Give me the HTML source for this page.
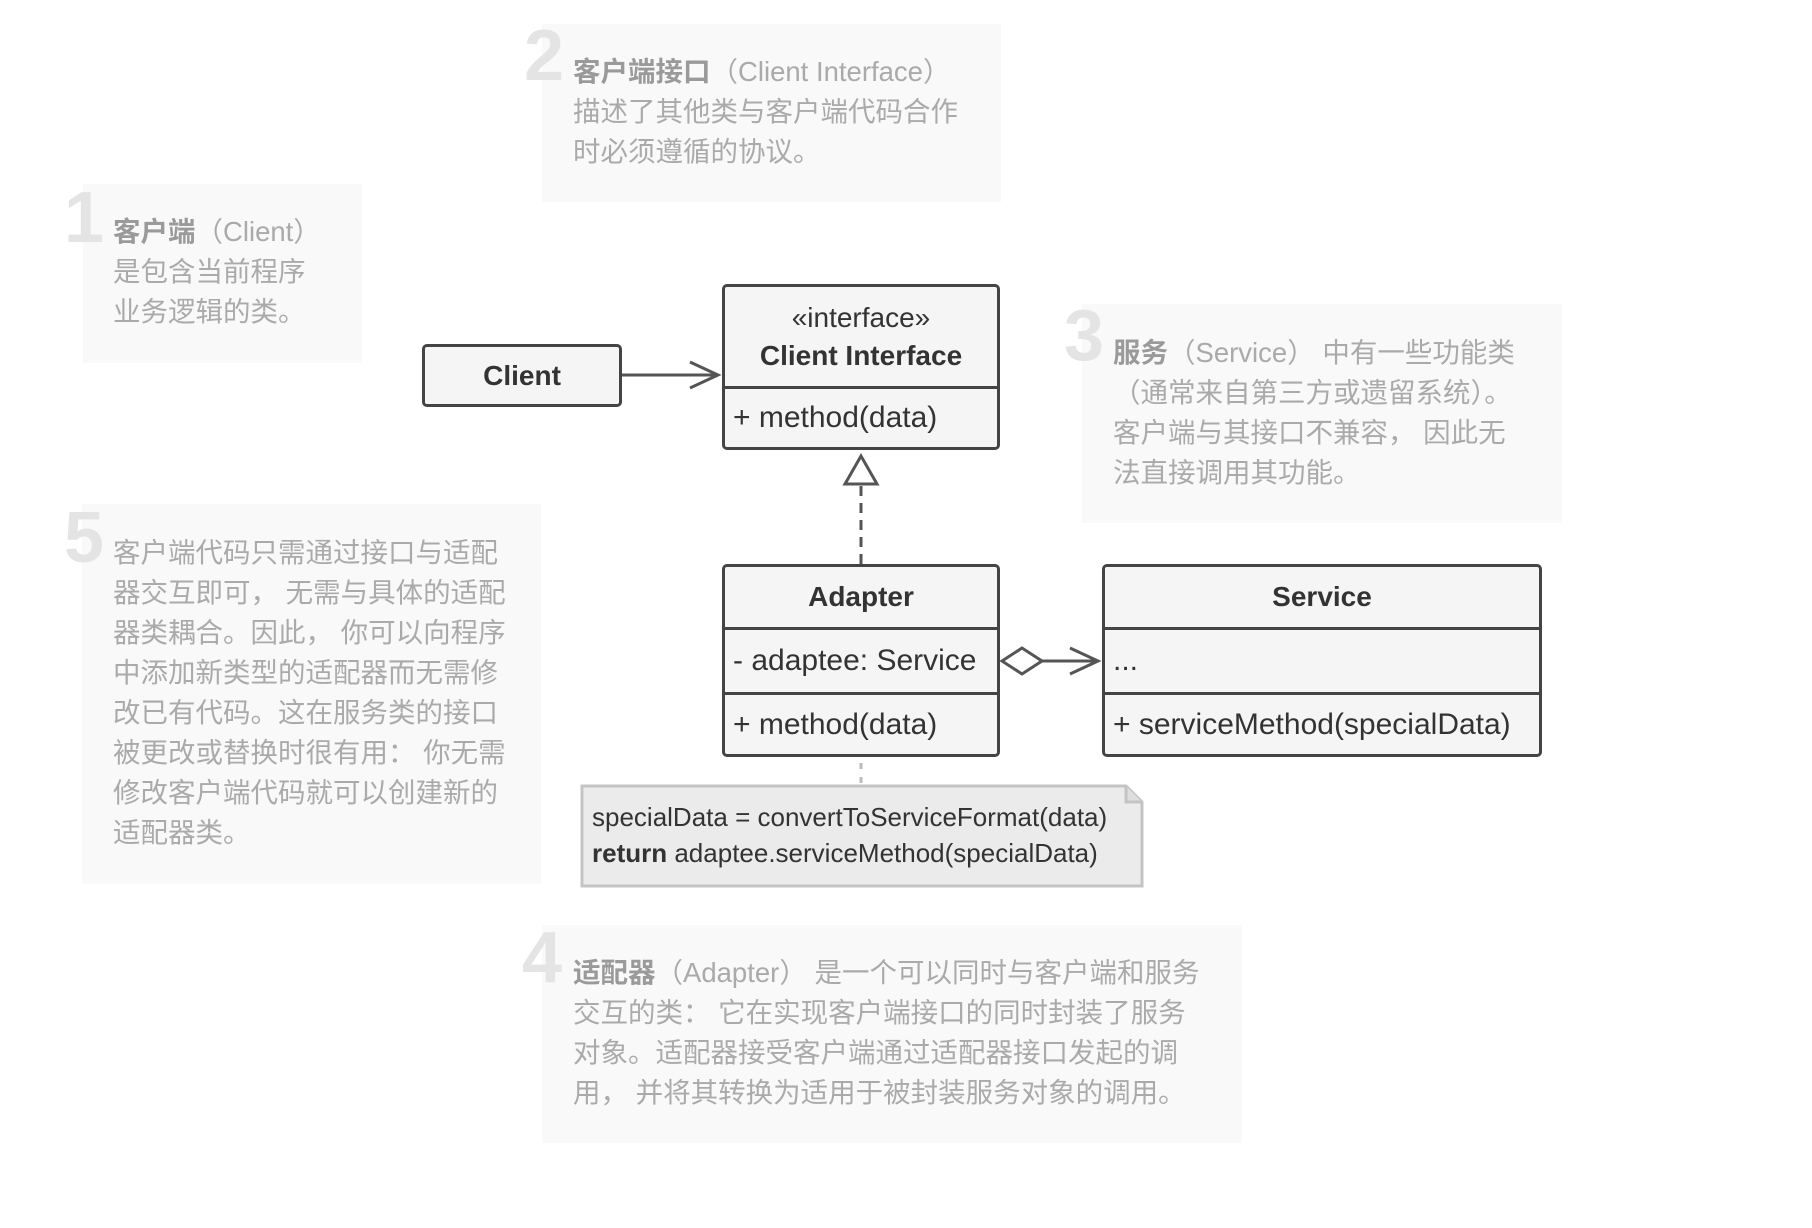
<!DOCTYPE html>
<html><head><meta charset="utf-8"><style>
*{margin:0;padding:0;box-sizing:border-box}
body{width:1812px;height:1228px;background:#fff;position:relative;overflow:hidden;font-family:"Liberation Sans","Noto Sans CJK SC",sans-serif}
.tb{position:absolute;background:#f9f9f9}
.num{position:absolute;font:bold 72px "Liberation Sans",sans-serif;color:#e4e4e4;line-height:1}
.tx{position:absolute;font-size:27.5px;line-height:40px;color:#aaa;font-family:"Liberation Sans","Noto Sans CJK SC",sans-serif;white-space:nowrap}
.tx b{color:#9a9a9a}
.box{position:absolute;border:3px solid #444;border-radius:5px;background:#f5f5f5;color:#333}
.row{position:absolute;left:0;right:0;display:flex;align-items:center;font-size:30px;padding-left:8px;white-space:nowrap}
.hd{justify-content:center;font-weight:bold;font-size:28px;padding-left:0}
.sep{position:absolute;left:0;right:0;height:3px;background:#444}
</style></head><body>

<div class="tb" style="left:83px;top:184px;width:279px;height:179px"></div>
<div class="tb" style="left:542px;top:24px;width:459px;height:178px"></div>
<div class="tb" style="left:1082px;top:304px;width:480px;height:219px"></div>
<div class="tb" style="left:82px;top:504px;width:459px;height:380px"></div>
<div class="tb" style="left:542px;top:925px;width:700px;height:218px"></div>

<div class="num" style="left:64px;top:182px">1</div>
<div class="num" style="left:524px;top:20px">2</div>
<div class="num" style="left:1064px;top:300px">3</div>
<div class="num" style="left:64px;top:502px">5</div>
<div class="num" style="left:522px;top:922px">4</div>

<div class="tx" style="left:113px;top:212px"><b>客户端</b>（Client）<br>是包含当前程序<br>业务逻辑的类。</div>
<div class="tx" style="left:573px;top:52px"><b>客户端接口</b>（Client Interface）<br>描述了其他类与客户端代码合作<br>时必须遵循的协议。</div>
<div class="tx" style="left:1113px;top:333px"><b>服务</b>（Service） 中有一些功能类<br>（通常来自第三方或遗留系统）。<br>客户端与其接口不兼容， 因此无<br>法直接调用其功能。</div>
<div class="tx" style="left:113px;top:533px">客户端代码只需通过接口与适配<br>器交互即可， 无需与具体的适配<br>器类耦合。因此， 你可以向程序<br>中添加新类型的适配器而无需修<br>改已有代码。这在服务类的接口<br>被更改或替换时很有用： 你无需<br>修改客户端代码就可以创建新的<br>适配器类。</div>
<div class="tx" style="left:573px;top:953px"><b>适配器</b>（Adapter） 是一个可以同时与客户端和服务<br>交互的类： 它在实现客户端接口的同时封装了服务<br>对象。适配器接受客户端通过适配器接口发起的调<br>用， 并将其转换为适用于被封装服务对象的调用。</div>

<svg style="position:absolute;left:0;top:0" width="1812" height="1228">
 <g stroke="#555" stroke-width="3" fill="none">
  <line x1="622" y1="375" x2="718" y2="375"/>
  <polyline points="690,362 718,375 690,388"/>
  <polygon points="861,456 845,484 877,484" fill="#fff"/>
  <line x1="861" y1="486" x2="861" y2="564" stroke-dasharray="10,7"/>
  <polygon points="1002,661 1022,648 1042,661 1022,674" fill="#fff"/>
  <line x1="1042" y1="661" x2="1098" y2="661"/>
  <polyline points="1070,648 1098,661 1070,674"/>
 </g>
 <line x1="861" y1="763" x2="861" y2="786" stroke="#bbb" stroke-width="3" stroke-dasharray="6,8"/>
 <path d="M582 786 H1126 L1142 802 V886 H582 Z" fill="#ebebeb" stroke="#c4c4c4" stroke-width="3"/>
 <path d="M1126 786 V802 H1142" fill="#ddd" stroke="#c4c4c4" stroke-width="3"/>
</svg>

<div class="box" style="left:422px;top:344px;width:200px;height:63px">
 <div class="row hd" style="top:0;bottom:0">Client</div>
</div>

<div class="box" style="left:722px;top:284px;width:278px;height:166px">
 <div class="row hd" style="top:0;height:99px;flex-direction:column;justify-content:center;line-height:38px"><span style="font-weight:normal;font-size:28px">«interface»</span><span>Client Interface</span></div>
 <div class="sep" style="top:99px"></div>
 <div class="row" style="top:102px;bottom:0">+ method(data)</div>
</div>

<div class="box" style="left:722px;top:564px;width:278px;height:193px">
 <div class="row hd" style="top:0;height:60px">Adapter</div>
 <div class="sep" style="top:60px"></div>
 <div class="row" style="top:63px;height:62px">- adaptee: Service</div>
 <div class="sep" style="top:125px"></div>
 <div class="row" style="top:128px;bottom:0">+ method(data)</div>
</div>

<div class="box" style="left:1102px;top:564px;width:440px;height:193px">
 <div class="row hd" style="top:0;height:60px">Service</div>
 <div class="sep" style="top:60px"></div>
 <div class="row" style="top:63px;height:62px">...</div>
 <div class="sep" style="top:125px"></div>
 <div class="row" style="top:128px;bottom:0">+ serviceMethod(specialData)</div>
</div>

<div style="position:absolute;left:592px;top:799px;font-size:26px;line-height:36px;color:#333;white-space:nowrap">specialData = convertToServiceFormat(data)<br><b>return</b> adaptee.serviceMethod(specialData)</div>
</body></html>
